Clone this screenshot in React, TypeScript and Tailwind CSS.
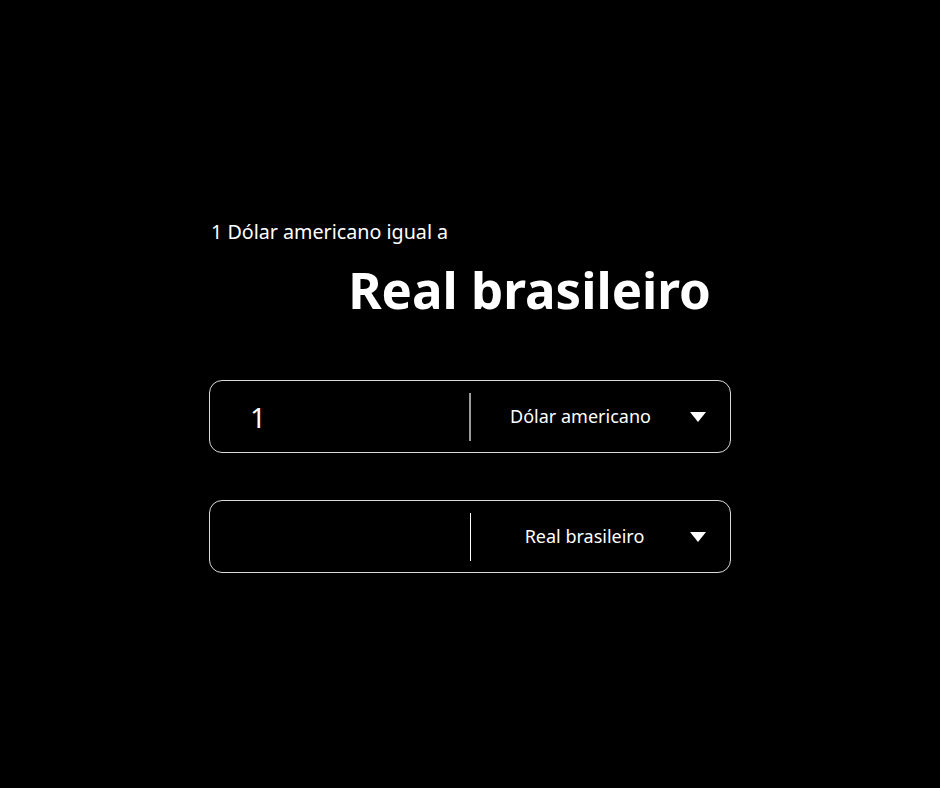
import React from "react";

function Arrow() {
  return (
    <svg width="16" height="10" viewBox="0 0 16 10" className="shrink-0">
      <polygon points="0,0 16,0 8,10" fill="#ffffff" />
    </svg>
  );
}

function Row({
  value,
  currency,
  dividerClass,
  textClass,
}: {
  value: string;
  currency: string;
  dividerClass: string;
  textClass: string;
}) {
  return (
    <div className="flex h-[73px] items-center rounded-[13px] border border-[#d9d9d9]">
      <div className="w-[259px] pl-[40px] text-[28px] leading-none text-white">{value}</div>
      <div className={`h-[48px] ${dividerClass}`} />
      <div className="flex flex-1 items-center">
        <div className={`flex-1 text-center text-[18px] text-white ${textClass}`}>{currency}</div>
        <div className="mr-[24px]">
          <Arrow />
        </div>
      </div>
    </div>
  );
}

export default function App() {
  return (
    <div
      className="min-h-screen w-full bg-black text-white"
      style={{ fontFamily: '"Noto Sans", "Open Sans", sans-serif' }}
    >
      <div className="ml-[209px] w-[522px] pt-[220px]">
        <p className="pl-[2px] text-[19.7px] leading-[24px]">1 Dólar americano igual a</p>
        <h1 className="mt-[13px] pr-[20px] text-right text-[51px] font-bold leading-[65px]">Real brasileiro</h1>
        <div className="mt-[58px]">
          <Row value="1" currency="Dólar americano" dividerClass="w-[2px] bg-[#9a9a9a]" textClass="" />
        </div>
        <div className="mt-[47px]">
          <Row value="" currency="Real brasileiro" dividerClass="ml-px w-px bg-white" textClass="pl-[8px]" />
        </div>
      </div>
    </div>
  );
}
